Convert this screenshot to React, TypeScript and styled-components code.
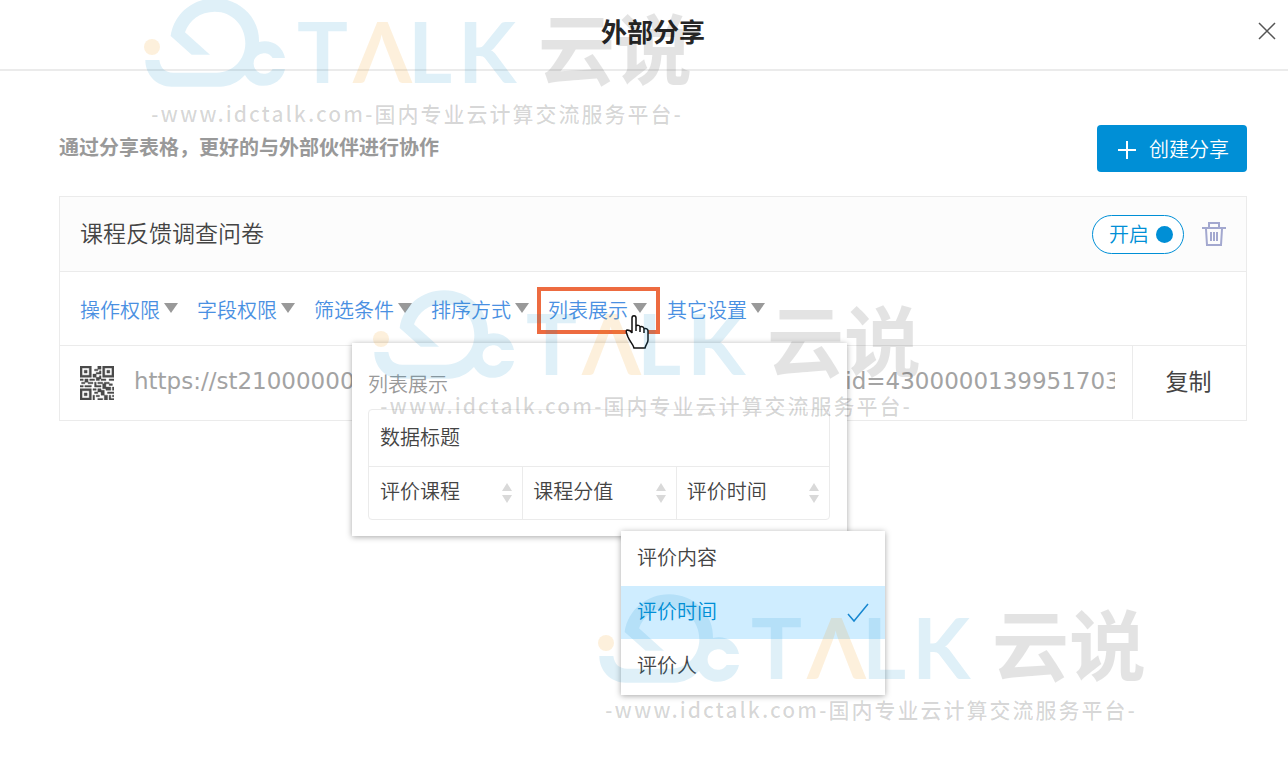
import React from "react";
import styled, { createGlobalStyle } from "styled-components";

const GlobalStyle = createGlobalStyle`
  * { box-sizing: border-box; }
  body { margin: 0; background: #fff; color: #444; overflow-x: hidden;
    font: 350 20px/28px "Noto Sans CJK SC", sans-serif; }
  button, input { font: inherit; color: inherit; margin: 0; padding: 0; border: 0; background: none; }
  button { cursor: pointer; }
`;

const Page = styled.div`
  position: relative;
  min-height: 100vh;
  overflow: hidden;
`;

const Header = styled.header`
  display: grid;
  grid-template-columns: 1fr auto 1fr;
  align-items: center;
  height: 71px;
  padding: 0 10px 8px 28px;
  border-bottom: 2px solid #ebebeb;
`;

const Title = styled.h1`
  grid-column: 2;
  margin: 0;
  font-size: 26px;
  line-height: 36px;
  font-weight: 700;
  color: #262626;
`;

const CloseButton = styled.button`
  justify-self: end;
  display: flex;
  padding: 1px;
`;

const Main = styled.main`
  padding: 54px 41px 0 59px;
`;

const Intro = styled.div`
  display: flex;
  justify-content: space-between;
  align-items: center;
  margin-bottom: 24px;
`;

const Hint = styled.p`
  margin: 0;
  padding-bottom: 4px;
  font-weight: 700;
  color: #999;
`;

const CreateButton = styled.button`
  display: flex;
  align-items: center;
  gap: 12px;
  height: 47px;
  padding: 0 18px 0 20px;
  border-radius: 4px;
  background: #008fd6;
  color: #fff;
`;

const Card = styled.section`
  border: 1px solid #ebebeb;
`;

const CardHead = styled.div`
  display: flex;
  align-items: center;
  height: 75px;
  padding: 0 20px;
  background: #fcfcfc;
  border-bottom: 1px solid #ebebeb;
`;

const CardTitle = styled.h2`
  flex: 1;
  margin: 0;
  padding-bottom: 4px;
  font-size: 23px;
  line-height: 32px;
  font-weight: 350;
`;

const Toggle = styled.button`
  display: flex;
  align-items: center;
  gap: 7px;
  height: 39px;
  margin-right: 18px;
  padding: 0 10px 0 16px;
  border: 1px solid #008fd6;
  border-radius: 20px;
  background: #fff;
  color: #008fd6;
`;

const Dot = styled.span`
  width: 17px;
  height: 17px;
  border-radius: 50%;
  background: #008fd6;
`;

const IconButton = styled.button`
  display: flex;
`;

const Tabs = styled.nav`
  display: flex;
  align-items: center;
  height: 73px;
  padding: 4px 9px 0;
`;

const TabSlot = styled.div`
  position: relative;
`;

const Tab = styled.button<{ $active?: boolean }>`
  display: flex;
  align-items: center;
  gap: ${(p) => (p.$active ? 5 : 4)}px;
  height: 47px;
  margin-right: ${(p) => (p.$active ? -4 : -5)}px;
  padding: 0 9px 2px ${(p) => (p.$active ? 7 : 11)}px;
  border: 4px solid ${(p) => (p.$active ? "#ed6b40" : "transparent")};
  border-left-width: ${(p) => (p.$active ? 4 : 0)}px;
  color: #4a90e2;
  white-space: nowrap;
`;

const Caret = styled.span`
  border: 7px solid transparent;
  border-top: 10px solid #999;
  border-bottom: 0;
  margin-bottom: 3px;
`;

const LinkRow = styled.div`
  display: flex;
  align-items: center;
  height: 75px;
  padding-left: 20px;
  border-top: 1px solid #ebebeb;
`;

const LinkInput = styled.input`
  flex: 1;
  min-width: 0;
  height: 40px;
  margin: 0 17px 4px 20px;
  outline: 0;
  font: 23px/32px "DejaVu Sans", sans-serif;
  color: #a3a3a3;
`;

const CopyButton = styled.button`
  align-self: stretch;
  width: 114px;
  margin-bottom: 1px;
  padding: 0 2px 6px 0;
  border-left: 1px solid #ebebeb;
  font-size: 23px;
  font-weight: 400;
`;

const Popover = styled.div`
  position: absolute;
  top: 56px;
  left: -185px;
  z-index: 1;
  width: 495px;
  padding: 27px 17px 16px 16px;
  background: #fff;
  box-shadow: 0 1px 6px rgba(0, 0, 0, 0.35);
`;

const PopoverTitle = styled.div`
  color: #999;
  margin-bottom: 11px;
`;

const Fields = styled.div`
  display: grid;
  grid-template-columns: repeat(3, 1fr);
  border: 1px solid #ebebeb;
  border-radius: 4px;
`;

const FieldCaption = styled.div`
  grid-column: 1 / -1;
  height: 57px;
  padding: 13px 11px;
  border-bottom: 1px solid #ebebeb;
`;

const FieldPicker = styled.button`
  display: flex;
  justify-content: space-between;
  align-items: center;
  height: 52px;
  padding: 0 10px 4px 11px;
  & + & { border-left: 1px solid #ebebeb; padding-left: 10px; }
  & svg { margin-top: 4px; }
`;

const Menu = styled.div`
  position: absolute;
  top: 188px;
  left: 269px;
  width: 264px;
  padding-bottom: 1px;
  background: #fff;
  box-shadow: 0 1px 6px rgba(0, 0, 0, 0.35);
`;

const MenuItem = styled.button<{ $selected?: boolean }>`
  display: flex;
  justify-content: space-between;
  align-items: center;
  width: 100%;
  height: ${(p) => (p.$selected ? 53 : 55)}px;
  padding: 0 16px 4px;
  background: ${(p) => (p.$selected ? "#cfedff" : "#fff")};
  color: ${(p) => (p.$selected ? "#008fd6" : "#444")};
  & svg { margin-top: 4px; }
`;

const Pointer = styled.svg`
  position: absolute;
  top: 28px;
  left: 88px;
  z-index: 2;
`;

const Mark = styled.div<{ $x: number; $y: number }>`
  position: absolute;
  left: ${(p) => p.$x}px;
  top: ${(p) => p.$y}px;
  z-index: 3;
  width: 560px;
  pointer-events: none;
`;

const MarkLogo = styled.svg`
  display: block;
  overflow: visible;
`;

const Tagline = styled.div`
  padding-left: 11px;
  font: 500 21px/28px "Noto Sans CJK SC", sans-serif;
  letter-spacing: 2px;
  color: rgba(0, 0, 0, 0.16);
  white-space: nowrap;
`;

const BLUE = "rgba(9,140,201,.13)";
const ORANGE = "rgba(242,155,22,.15)";
const GRAY = "rgba(0,0,0,.11)";

const Watermark = ({ x, y }: { x: number; y: number }) => (
  <Mark $x={x} $y={y} aria-hidden="true">
    <MarkLogo width="560" height="99" viewBox="0 0 560 99">
      <circle cx="12" cy="47" r="8" fill={ORANGE} />
      <path
        transform="scale(.3333)"
        fill={BLUE}
        d="M92 108C102 40 160-5 225-5C300-5 360 55 357 126C395 117 428 138 435 174H398A31 31 0 1 0 398 207H435C425 262 345 278 315 225C295 247 268 260 240 260H95C50 260 16 225 16 180H58C62 205 75 218 100 218H230C280 218 316 178 316 130C316 75 275 35 225 35C180 35 148 60 135 97L210 164H155Z"
      />
      <g fontFamily="Lato, sans-serif" fontWeight="700" fontSize="85">
        <text x="157" y="83" fill={BLUE}>T</text>
        <text x="213" y="83" fill={ORANGE}>Λ</text>
        <text x="268" y="83" fill={BLUE}>L</text>
        <text x="318" y="83" fill={BLUE}>K</text>
      </g>
      <text x="398" y="79" fontFamily="Noto Sans CJK SC, sans-serif" fontWeight="700" fontSize="77" fill={GRAY}>
        云说
      </text>
    </MarkLogo>
    <Tagline>-www.idctalk.com-国内专业云计算交流服务平台-</Tagline>
  </Mark>
);

const SortArrows = () => (
  <svg width="10" height="20" viewBox="0 0 10 20" fill="#d9d9d9">
    <path d="M5 0l5 8H0ZM5 20l5-8H0Z" />
  </svg>
);

const QrIcon = () => (
  <svg width="34" height="34" viewBox="0 0 21 21" fill="#4a4a4a" stroke="#4a4a4a" strokeWidth=".25">
    <path
      fillRule="evenodd"
      d="M0 0h7v7H0ZM1.300 1.300v4.400h4.400V1.300ZM14 0h7v7h-7ZM15.300 1.300v4.400h4.400V1.300ZM0 14h7v7H0ZM1.300 15.300v4.400h4.400v-4.400ZM2.600 2.600h1.800v1.800H2.600ZM16.600 2.600h1.800v1.800h-1.800ZM2.600 16.600h1.800v1.800H2.600Z"
    />
    <path d="M11 0h2v2h-2ZM9 2h2v1H9ZM12 3h1v2h-1ZM10 4h2v1h-2ZM8 5h2v2H8ZM12 6h1v2h-1ZM10 7h2v2h-2ZM0 8h2v1H0ZM3 8h2v2H3ZM6 8h3v1H6ZM13 8h3v1h-3ZM18 8h3v1h-3ZM1 10h2v1H1ZM5 10h3v1H5ZM9 10h1v3H9ZM11 10h3v1h-3ZM15 10h3v1h-3ZM0 12h2v1H0ZM3 12h4v1H3ZM10 12h3v1h-3ZM14 11h2v3h-2ZM18 11h2v1h-2ZM8 14h2v1H8ZM11 14h2v2h-2ZM16 13h3v2h-3ZM20 13h1v2h-1ZM9 16h2v1H9ZM13 15h2v3h-2ZM17 16h4v1h-4ZM8 18h1v3H8ZM10 18h2v1h-2ZM15 18h2v3h-2ZM18 18h1v2h-1ZM20 18h1v1h-1ZM11 20h3v1h-3ZM18 20h3v1h-3Z" />
  </svg>
);

const tabsBefore = ["操作权限", "字段权限", "筛选条件", "排序方式"];
const fields = ["评价课程", "课程分值", "评价时间"];
const options = ["评价内容", "评价时间", "评价人"];
const selected = "评价时间";
const shareUrl =
  "https://st2100000001.tables.example.com/share/form?table&id=4300000139951703";

export default function App() {
  return (
    <Page>
      <GlobalStyle />
      <Header>
        <Title>外部分享</Title>
        <CloseButton aria-label="关闭">
          <svg width="20" height="20" viewBox="0 0 20 20" stroke="#555" strokeWidth="1.5">
            <path d="M2 2l16 16M18 2L2 18" />
          </svg>
        </CloseButton>
      </Header>
      <Main>
        <Intro>
          <Hint>通过分享表格，更好的与外部伙伴进行协作</Hint>
          <CreateButton>
            <svg width="20" height="20" viewBox="0 0 20 20" stroke="#fff" strokeWidth="2">
              <path d="M10 2v18M1 11h18" />
            </svg>
            创建分享
          </CreateButton>
        </Intro>
        <Card>
          <CardHead>
            <CardTitle>课程反馈调查问卷</CardTitle>
            <Toggle aria-pressed="true">
              开启
              <Dot />
            </Toggle>
            <IconButton aria-label="删除">
              <svg width="24" height="24" viewBox="0 0 24 24" fill="none" stroke="#a3a8cf" strokeWidth="2">
                <path d="M0 6h24M7 5V1h10v4M4 7l1 16h14l1-16" />
                <path d="M9 10v9M12 10v9M15 10v9" />
              </svg>
            </IconButton>
          </CardHead>
          <Tabs>
            {tabsBefore.map((t) => (
              <Tab key={t}>
                {t}
                <Caret />
              </Tab>
            ))}
            <TabSlot>
              <Tab $active>
                列表展示
                <Caret />
              </Tab>
              <Pointer width="25" height="34" viewBox="0 0 25 34">
                <path
                  d="M7 18V3c0-3 4-3 4 0v8c1-1 4-1 4 1 2-1 4 0 4 2 2-1 4 0 4 2v9c0 3-2 4-3 8H9c-1-4-4-6-6-11-1-3-3-6-1-7 2 0 4 1 5 3ZM11 11v5M15 12v5M19 14v4"
                  fill="#fff"
                  stroke="#111"
                  strokeWidth="1.5"
                />
              </Pointer>
              <Popover>
                <PopoverTitle>列表展示</PopoverTitle>
                <Fields>
                  <FieldCaption>数据标题</FieldCaption>
                  {fields.map((f) => (
                    <FieldPicker key={f}>
                      {f}
                      <SortArrows />
                    </FieldPicker>
                  ))}
                </Fields>
                <Menu>
                  {options.map((o) => (
                    <MenuItem key={o} $selected={o === selected}>
                      {o}
                      {o === selected && (
                        <svg width="22" height="20" viewBox="0 0 22 20" fill="none" stroke="#1787d0" strokeWidth="1.5">
                          <path d="M1 11l6 7L21 1" />
                        </svg>
                      )}
                    </MenuItem>
                  ))}
                </Menu>
              </Popover>
            </TabSlot>
            <Tab>
              其它设置
              <Caret />
            </Tab>
          </Tabs>
          <LinkRow>
            <QrIcon />
            <LinkInput aria-label="分享链接" readOnly value={shareUrl} />
            <CopyButton>复制</CopyButton>
          </LinkRow>
        </Card>
      </Main>
      <Watermark x={140} y={0} />
      <Watermark x={369} y={292} />
      <Watermark x={594} y={596} />
    </Page>
  );
}
